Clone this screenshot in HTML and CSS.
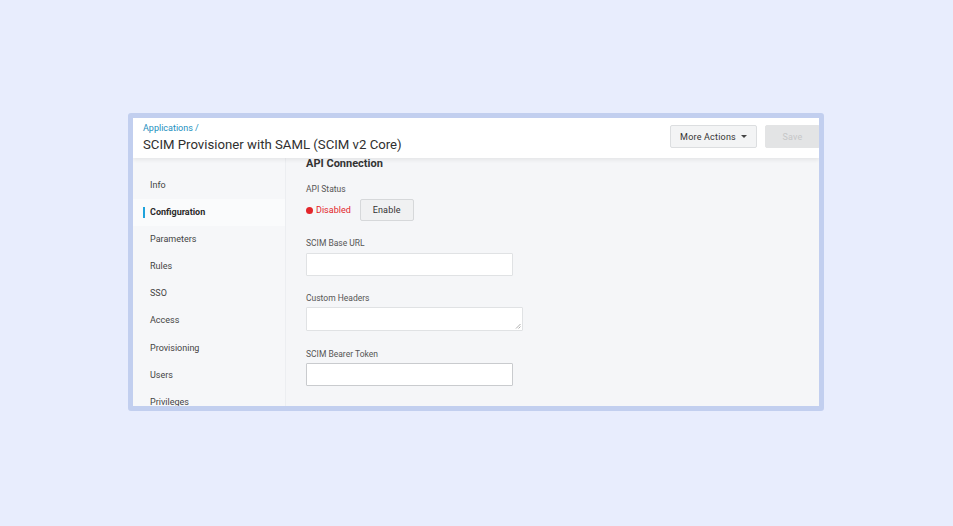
FILE: index.html
```html
<!DOCTYPE html>
<html>
<head>
<meta charset="utf-8">
<link rel="stylesheet" href="styles.css">
</head>
<body>
<div class="frame">
  <div class="inner">
    <header class="header">
      <div class="titles">
        <div class="crumb">Applications /</div>
        <h1 class="title">SCIM Provisioner with SAML (SCIM v2 Core)</h1>
      </div>
      <div class="actions">
        <button class="btn more">More Actions <span class="caret"></span></button>
        <button class="btn save">Save</button>
      </div>
    </header>
    <div class="body">
      <nav class="side">
        <div class="item">Info</div>
        <div class="item active">Configuration</div>
        <div class="item">Parameters</div>
        <div class="item">Rules</div>
        <div class="item">SSO</div>
        <div class="item">Access</div>
        <div class="item">Provisioning</div>
        <div class="item">Users</div>
        <div class="item">Privileges</div>
      </nav>
      <main class="main">
        <h2 class="section">API Connection</h2>
        <div class="label first">API Status</div>
        <div class="status">
          <span class="dot"></span><span class="disabled">Disabled</span>
          <button class="btn enable">Enable</button>
        </div>
        <div class="label l-url">SCIM Base URL</div>
        <div class="input i-url"></div>
        <div class="label l-headers">Custom Headers</div>
        <div class="input textarea"><svg class="grip" width="6" height="6" viewBox="0 0 6 6"><path d="M5.5 1 L1 5.5 M5.5 3.5 L3.5 5.5" stroke="#999" stroke-width="0.8"/></svg></div>
        <div class="label l-token">SCIM Bearer Token</div>
        <div class="input dark"></div>
      </main>
    </div>
  </div>
</div>
</body>
</html>
```
FILE: styles.css
```css
* { box-sizing: border-box; }
html, body { margin: 0; padding: 0; }
body {
  background: #e8edfd;
  font-family: Roboto, "Liberation Sans", Arial, sans-serif;
  width: 953px;
  height: 526px;
  overflow: hidden;
  padding-top: 113px;
  padding-left: 128px;
}
.frame {
  width: 696px;
  height: 298px;
  border: 5px solid #c2cfef;
  border-radius: 3px;
  background: #f5f6f8;
}
.inner {
  width: 100%;
  height: 100%;
  overflow: hidden;
  display: flex;
  flex-direction: column;
  position: relative;
}
.header {
  height: 40px;
  flex: none;
  background: #ffffff;
  display: flex;
  align-items: flex-start;
  justify-content: space-between;
  padding-left: 10px;
  box-shadow: 0 2px 4px rgba(0,0,0,0.07);
  position: relative;
  z-index: 2;
}
.titles { padding-top: 4px; }
.crumb {
  font-size: 9px;
  line-height: 12px;
  color: #1b8fbe;
}
.title {
  margin: 2px 0 0 0;
  font-size: 13.2px;
  line-height: 18px;
  font-weight: 400;
  color: #2f2f2f;
}
.actions {
  display: flex;
  gap: 8px;
  padding-top: 7px;
  margin-right: -1px;
}
.btn {
  font-family: inherit;
  font-size: 9px;
  height: 23px;
  border-radius: 2px;
  padding: 0;
  letter-spacing: 0.2px;
}
.more {
  width: 87px;
  background: #f3f4f5;
  border: 1px solid #dcdee0;
  color: #333;
  display: flex;
  align-items: center;
  justify-content: center;
  gap: 5px;
  margin-left: -1px;
}
.caret {
  width: 0; height: 0;
  border-left: 3px solid transparent;
  border-right: 3px solid transparent;
  border-top: 3.5px solid #444;
}
.save {
  width: 55px;
  background: #e3e4e5;
  border: 1px solid #e3e4e5;
  color: #c6c7c8;
}
.body {
  flex: 1;
  display: flex;
  min-height: 0;
}
.side {
  width: 153px;
  flex: none;
  background: #f6f7f9;
  border-right: 1px solid #eceef1;
  padding-top: 14px;
}
.item {
  height: 27.1px;
  line-height: 27px;
  padding-left: 17px;
  font-size: 9px;
  color: #444;
  position: relative;
}
.item.active {
  background: #fafbfc;
  font-weight: 700;
  color: #2a2a2a;
}
.item.active::before {
  content: "";
  position: absolute;
  left: 10px;
  top: 8px;
  width: 1.5px;
  height: 11px;
  background: #1ea3dc;
}
.main {
  flex: 1;
  padding-left: 20px;
  background: #f5f6f8;
}
.section {
  margin: 0;
  font-size: 11px;
  line-height: 12px;
  font-weight: 700;
  color: #333;
}
.label {
  font-size: 8.5px;
  line-height: 11px;
  color: #555;
}
.label.first { margin-top: 14px; }
.l-url { margin-top: 17px; }
.l-headers { margin-top: 17px; }
.l-token { margin-top: 18px; }
.status {
  display: flex;
  align-items: center;
  margin-top: 4px;
  height: 22px;
}
.dot {
  width: 7px; height: 7px;
  border-radius: 50%;
  background: #e3262b;
  margin-right: 3px;
}
.disabled {
  font-size: 9px;
  color: #e3262b;
  margin-right: 10px;
}
.enable {
  width: 54px;
  height: 22px;
  margin-left: -1px;
  background: #f0f1f2;
  border: 1px solid #d6d8da;
  color: #333;
  font-size: 9px;
}
.input {
  width: 207px;
  height: 23px;
  margin-top: 3px;
  background: #fff;
  border: 1px solid #e0e2e4;
  border-radius: 1px;
}
.i-url { margin-top: 4px; }
.textarea {
  width: 217px;
  height: 24px;
  position: relative;
}
.grip {
  position: absolute;
  right: 1px;
  bottom: 1px;
}
.dark { border-color: #c9cbce; }
```
